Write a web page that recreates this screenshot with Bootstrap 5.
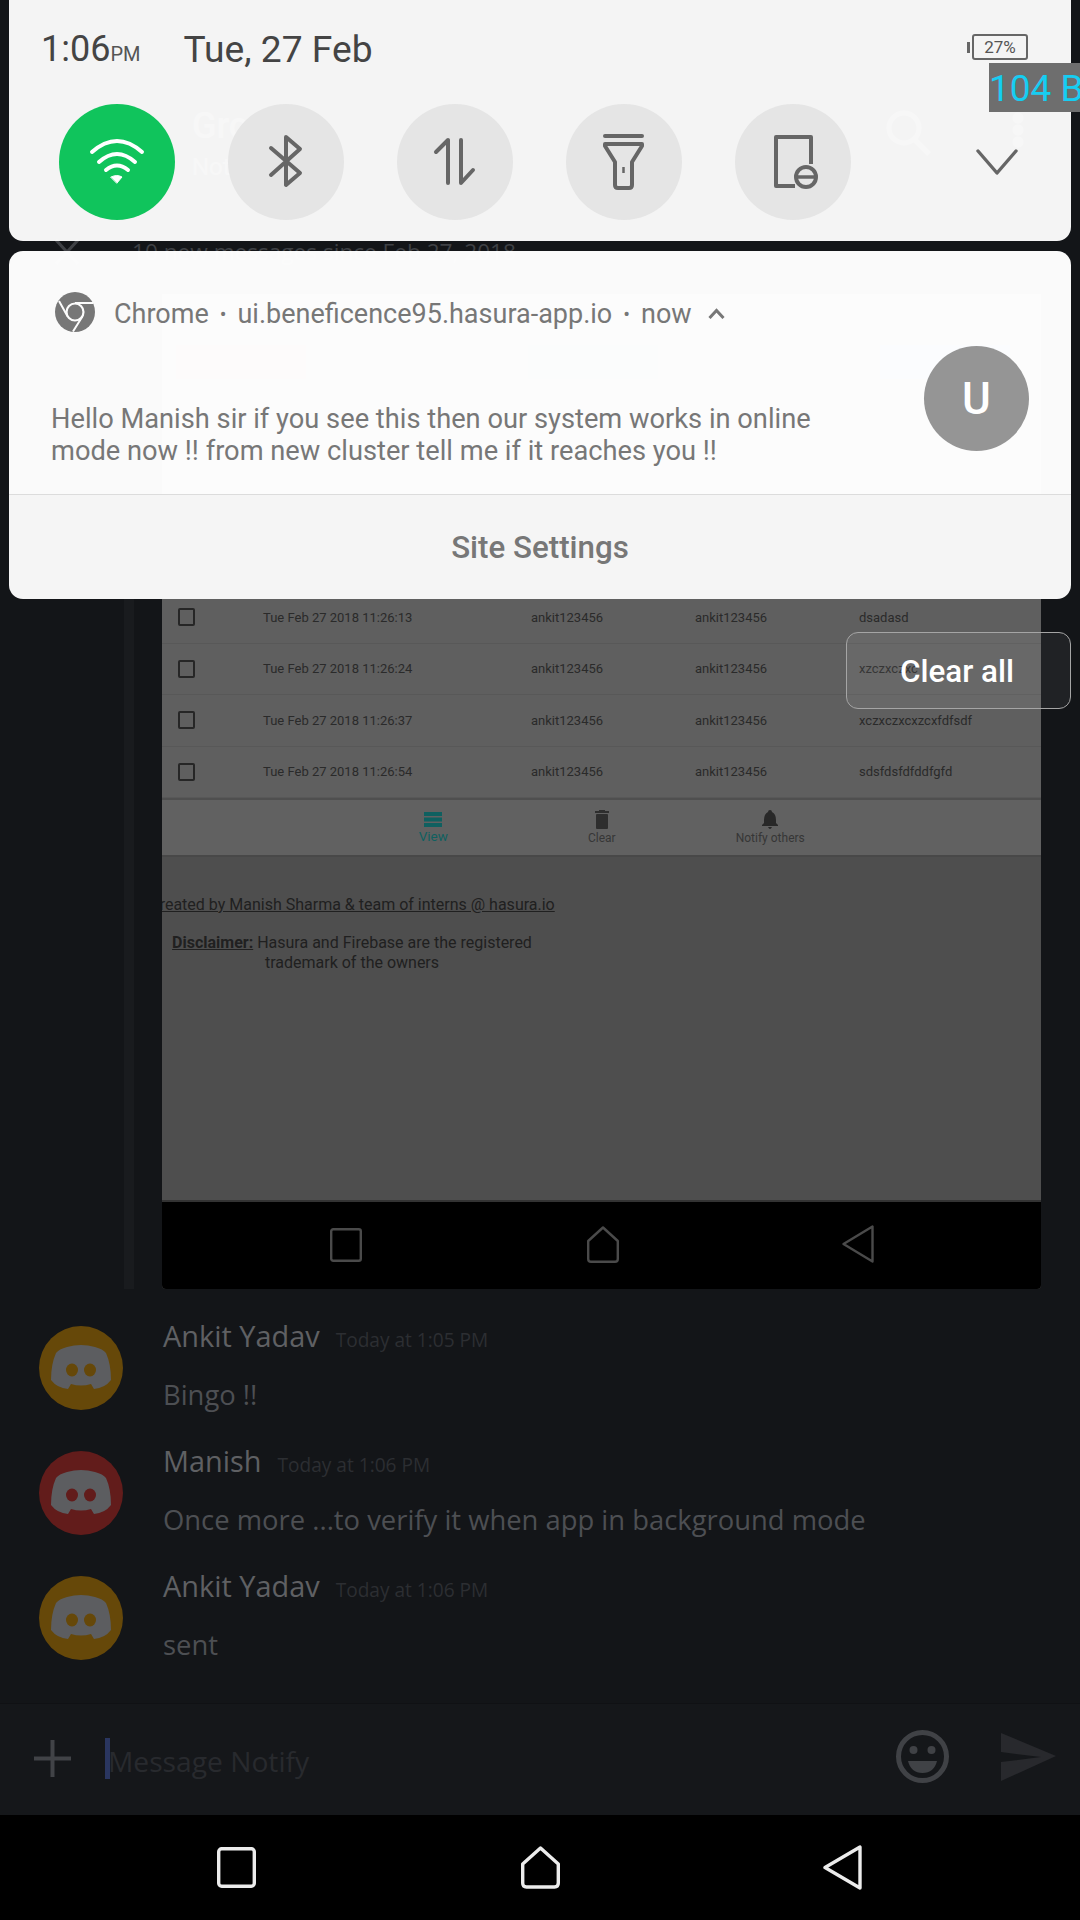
<!DOCTYPE html>
<html lang="en">
<head>
    <meta charset="UTF-8">
    <meta name="viewport" content="width=device-width, initial-scale=1.0">
    <title>Notification shade</title>
    <link href="https://cdn.jsdelivr.net/npm/bootstrap@5.3.0/dist/css/bootstrap.min.css" rel="stylesheet">
    <style>
        body { background: #131518; font-family: Roboto, "Liberation Sans", sans-serif; }
        .screen { width: 1080px; height: 1920px; overflow: hidden; background: #131518; }

        /* chat behind the shade */
        .chat-head { height: 232px; padding: 108px 56px 0 45px; color: #6a6c70; }
        .chat-title { margin-left: 147px; font-size: 36px; line-height: 36px; font-weight: 500; }
        .chat-sub { margin-left: 147px; font-size: 24px; line-height: 30px; margin-top: 8px; }
        .new-bar { height: 40px; padding-left: 55px; color: #3f4145; font-family: "Open Sans", sans-serif; font-size: 22.6px; }
        .new-bar span { margin-left: 53px; }
        .embed-wrap { padding-left: 124px; margin-top: 22px; }
        .embed-rule { width: 10px; background: #191b1e; margin-right: 28px; }
        .embed-shot { width: 879px; background: #5f5f5f; border-radius: 0 0 4px 4px; overflow: hidden; }
        .shot-top { height: 298px; padding: 51px 14px 0; gap: 222px; }
        .ghost-btn { height: 34px; width: 130px; opacity: .6; }
        .shot-row { height: 51.5px; border-bottom: 1px solid #585858; font-size: 13px; color: #2a2a2a; }
        .shot-check { width: 17px; height: 18px; border: 2px solid #262626; border-radius: 2px; margin-left: 16px; margin-right: 68px; }
        .shot-date { width: 268px; }
        .shot-user { width: 164px; }
        .shot-nav { height: 59px; border-top: 2px solid #4f4f4f; border-bottom: 2px solid #484848; background: #616161; font-size: 12px; color: #363636; padding-left: 187px; }
        .shot-tab { width: 168.5px; line-height: 14px; }
        .shot-tab svg { display: block; margin: 0 auto 2px; }
        .tab-on { color: #0f6060; font-size: 13.5px; }
        .shot-foot { height: 343px; background: #4e4e4e; color: #202020; font-size: 16px; line-height: 20px; overflow: hidden; padding-top: 38px; }
        .foot-text { width: 420px; margin-left: -20px; white-space: nowrap; }
        .foot-text p { margin: 0 0 18px; }
        .shot-bar { height: 89px; background: #000; border-top: 2px solid #333; }

        .msg-list { padding-top: 37px; height: 414px; font-family: "Open Sans", sans-serif; }
        .msg-item { height: 125px; padding-left: 39px; }
        .msg-avatar { width: 84px; height: 84px; margin-right: 40px; }
        .msg-text { margin-top: -7px; }
        .msg-name { font-size: 28.9px; line-height: 34px; color: #5f6063; margin-right: 16px; }
        .msg-time { font-size: 19.1px; color: #2c2e32; }
        .msg-body { font-size: 27.4px; line-height: 34px; color: #4d4f53; margin-top: 23px; }

        .input-bar { height: 112px; background: #15171a; border-top: 1px solid #101114; padding: 0 24px 0 34px; font-family: "Open Sans", sans-serif; }
        .input-plus { width: 37px; height: 37px; margin-right: 34px; margin-top: -3px; }
        .input-field { border-left: 5px solid #2a3660; height: 41px; line-height: 46px; font-size: 28.2px; color: #282a2e; margin-top: -3px; text-indent: -2px; }
        .input-emoji { margin-right: 52px; margin-top: -6px; }
        .input-send { margin-top: -6px; }
        .nav-strip { height: 105px; background: #000; }
        .nav-slot { position: absolute; }

        /* shade on top */
        .qs-panel { left: 9px; top: 0; width: 1062px; height: 241px; background: rgba(252, 252, 252, .97); border-radius: 0 0 14px 14px; color: #444; }
        .qs-top { height: 104px; padding: 27px 43px 0 32px; }
        .qs-clock { font-size: 36px; line-height: 44px; color: #444; }
        .qs-clock small { font-size: 20px; color: #555; margin-right: 43px; }
        .qs-date { font-size: 37.2px; line-height: 44px; color: #444; }
        .batt-group { margin-top: 7px; }
        .batt { width: 56px; height: 26px; border: 2px solid #666; border-radius: 3px; font-size: 17px; line-height: 22px; color: #555; margin-left: 2px; }
        .batt-nub { width: 3px; height: 11px; background: #666; }
        .qs-tiles { padding-left: 50px; gap: 53px; }
        .qs-tile { width: 116px; height: 116px; background: #e5e5e5; }
        .tile-on { background: #10c45c; }
        .qs-more { margin-left: 72px; }
        .speed-tag { left: 989px; top: 63px; width: 91px; height: 49px; background: #6e6e6e; color: #16cdf2; font-size: 37px; line-height: 52px; white-space: nowrap; overflow: hidden; }

        .note-panel { left: 9px; top: 251px; width: 1062px; height: 348px; border-radius: 14px; overflow: hidden; color: #777; }
        .note-main { height: 244px; background: rgba(255, 255, 255, .982); border-bottom: 1px solid #dcdcdc; }
        .note-head { height: 122px; padding: 41px 0 0 46px; font-size: 27px; line-height: 44px; }
        .note-head svg.chrome { margin: 0 19px 0 0; }
        .note-dot { margin: 0 11px; font-size: 20px; }
        .note-body { padding-left: 42px; }
        .note-text { width: 780px; font-size: 27.25px; line-height: 32px; padding-top: 30px; }
        .note-avatar { width: 105px; height: 105px; background: #959595; color: #fff; font-size: 44px; font-weight: 500; margin-left: 93px; margin-top: -27px; }
        .note-action { height: 104px; padding-top: 2px; background: #f5f5f5; font-size: 31.3px; font-weight: 500; color: #777; }
        .clear-btn { left: 846px; top: 632px; width: 225px; height: 77px; padding: 3px 3px 0 0 !important; border: 1px solid #a5a5a5; border-radius: 12px; background: rgba(255, 255, 255, .06); color: #fff; font-size: 31.4px; font-weight: 500; }
    </style>
</head>
<body>
<div class="screen position-relative d-flex flex-column">

    <!-- Chat under the shade -->
    <div class="chat-head d-flex justify-content-between">
        <div>
            <div class="chat-title">Group</div>
            <div class="chat-sub">Notify</div>
        </div>
        <svg width="150" height="50" viewBox="0 0 150 50" fill="none" stroke="#6a6c70" stroke-width="5">
            <circle cx="30" cy="20" r="15"/><path d="M40 31 L55 46"/>
            <circle cx="144" cy="10" r="3" fill="#6a6c70"/><circle cx="144" cy="22" r="3" fill="#6a6c70"/><circle cx="144" cy="34" r="3" fill="#6a6c70"/>
        </svg>
    </div>
    <div class="new-bar d-flex align-items-center">
        <svg width="24" height="26" viewBox="0 0 24 26" fill="none" stroke="#3f4145" stroke-width="3"><path d="M1 1 L23 25 M23 1 L1 25"/></svg>
        <span>10 new messages since Feb 27, 2018</span>
    </div>

    <div class="embed-wrap d-flex">
        <div class="embed-rule"></div>
        <div class="embed-shot">
            <div class="shot-top d-flex">
                <div class="ghost-btn bg-danger"></div>
                <div class="ghost-btn bg-success"></div>
                <div class="ghost-btn bg-primary"></div>
            </div>
            <div class="shot-row d-flex align-items-center"><div class="shot-check"></div><div class="shot-date">Tue Feb 27 2018 11:26:13</div><div class="shot-user">ankit123456</div><div class="shot-user">ankit123456</div><div>dsadasd</div></div>
            <div class="shot-row d-flex align-items-center"><div class="shot-check"></div><div class="shot-date">Tue Feb 27 2018 11:26:24</div><div class="shot-user">ankit123456</div><div class="shot-user">ankit123456</div><div>xzczxczxc</div></div>
            <div class="shot-row d-flex align-items-center"><div class="shot-check"></div><div class="shot-date">Tue Feb 27 2018 11:26:37</div><div class="shot-user">ankit123456</div><div class="shot-user">ankit123456</div><div>xczxczxcxzcxfdfsdf</div></div>
            <div class="shot-row d-flex align-items-center"><div class="shot-check"></div><div class="shot-date">Tue Feb 27 2018 11:26:54</div><div class="shot-user">ankit123456</div><div class="shot-user">ankit123456</div><div>sdsfdsfdfddfgfd</div></div>
            <div class="shot-nav d-flex align-items-center">
                <div class="shot-tab text-center tab-on">
                    <svg width="18" height="15" viewBox="0 0 18 15" fill="#0f6060"><rect width="18" height="4"/><rect y="5.5" width="18" height="4"/><rect y="11" width="18" height="4"/></svg>
                    View
                </div>
                <div class="shot-tab text-center">
                    <svg width="14" height="19" viewBox="0 0 14 19" fill="#2e2e2e"><rect y="1" width="14" height="2"/><rect x="4" width="6" height="2"/><rect x="1" y="4" width="12" height="15" rx="1"/></svg>
                    Clear
                </div>
                <div class="shot-tab text-center">
                    <svg width="16" height="19" viewBox="0 0 16 19" fill="#282828"><path d="M8 0 Q10 0 10 2 Q14 4 14 10 V13 L16 15 V16 H0 V15 L2 13 V10 Q2 4 6 2 Q6 0 8 0 Z M6 17 H10 Q9 19 8 19 Q7 19 6 17 Z"/></svg>
                    Notify others
                </div>
            </div>
            <div class="shot-foot">
                <div class="foot-text text-center">
                    <p class="text-decoration-underline">Created by Manish Sharma &amp; team of interns @ hasura.io</p>
                    <p><b class="text-decoration-underline">Disclaimer:</b> Hasura and Firebase are the registered<br>trademark of the owners</p>
                </div>
            </div>
            <div class="shot-bar position-relative">
                <svg class="nav-slot" style="left:168px;top:26px" width="32" height="34" viewBox="0 0 32 34" fill="none" stroke="#4a4a4a" stroke-width="2.4"><rect x="1.2" y="1.2" width="29.6" height="31.6" rx="2"/></svg>
                <svg class="nav-slot" style="left:425px;top:24px" width="32" height="37" viewBox="0 0 32 37" fill="none" stroke="#4a4a4a" stroke-width="2.4"><path d="M16 1.5 L30.8 15 V33 Q30.8 35.8 28 35.8 H4 Q1.2 35.8 1.2 33 V15 Z" stroke-linejoin="round"/></svg>
                <svg class="nav-slot" style="left:680px;top:23px" width="32" height="38" viewBox="0 0 32 38" fill="none" stroke="#4a4a4a" stroke-width="2.4"><path d="M30.5 1.5 V36.5 L1.5 19 Z" stroke-linejoin="round"/></svg>
            </div>
        </div>
    </div>

    <div class="msg-list">
        <div class="msg-item d-flex">
            <svg class="msg-avatar flex-shrink-0" viewBox="0 0 84 84"><circle cx="42" cy="42" r="42" fill="#664809"/><path d="M28 21 Q20 23 17 27 Q12 38 12 54 Q18 62 29 63 L32 58 Q42 61 52 58 L55 63 Q66 62 72 54 Q72 38 67 27 Q64 23 56 21 Q42 17 28 21 Z" fill="#5c5d60"/><ellipse cx="33" cy="44" rx="6" ry="6.5" fill="#664809"/><ellipse cx="51" cy="44" rx="6" ry="6.5" fill="#664809"/></svg>
            <div class="msg-text">
                <div class="d-flex align-items-baseline"><span class="msg-name">Ankit Yadav</span><span class="msg-time">Today at 1:05 PM</span></div>
                <div class="msg-body">Bingo !!</div>
            </div>
        </div>
        <div class="msg-item d-flex">
            <svg class="msg-avatar flex-shrink-0" viewBox="0 0 84 84"><circle cx="42" cy="42" r="42" fill="#621c1b"/><path d="M28 21 Q20 23 17 27 Q12 38 12 54 Q18 62 29 63 L32 58 Q42 61 52 58 L55 63 Q66 62 72 54 Q72 38 67 27 Q64 23 56 21 Q42 17 28 21 Z" fill="#5c5d60"/><ellipse cx="33" cy="44" rx="6" ry="6.5" fill="#621c1b"/><ellipse cx="51" cy="44" rx="6" ry="6.5" fill="#621c1b"/></svg>
            <div class="msg-text">
                <div class="d-flex align-items-baseline"><span class="msg-name">Manish</span><span class="msg-time">Today at 1:06 PM</span></div>
                <div class="msg-body">Once more ...to verify it when app in background mode</div>
            </div>
        </div>
        <div class="msg-item d-flex">
            <svg class="msg-avatar flex-shrink-0" viewBox="0 0 84 84"><circle cx="42" cy="42" r="42" fill="#664809"/><path d="M28 21 Q20 23 17 27 Q12 38 12 54 Q18 62 29 63 L32 58 Q42 61 52 58 L55 63 Q66 62 72 54 Q72 38 67 27 Q64 23 56 21 Q42 17 28 21 Z" fill="#5c5d60"/><ellipse cx="33" cy="44" rx="6" ry="6.5" fill="#664809"/><ellipse cx="51" cy="44" rx="6" ry="6.5" fill="#664809"/></svg>
            <div class="msg-text">
                <div class="d-flex align-items-baseline"><span class="msg-name">Ankit Yadav</span><span class="msg-time">Today at 1:06 PM</span></div>
                <div class="msg-body">sent</div>
            </div>
        </div>
    </div>

    <div class="input-bar d-flex align-items-center">
        <svg class="input-plus" viewBox="0 0 37 37" stroke="#414347" stroke-width="4"><path d="M18.5 0 V37 M0 18.5 H37"/></svg>
        <div class="input-field flex-grow-1">Message Notify</div>
        <svg class="input-emoji" width="53" height="53" viewBox="0 0 53 53" fill="none"><circle cx="26.5" cy="26.5" r="24" stroke="#404246" stroke-width="5"/><circle cx="17.5" cy="20" r="4" fill="#404246"/><circle cx="35.5" cy="20" r="4" fill="#404246"/><path d="M12 31 H41 Q38 43 26.5 43 Q15 43 12 31 Z" fill="#404246"/></svg>
        <svg class="input-send" width="55" height="48" viewBox="0 0 55 48" fill="#28292d"><path d="M0 0 L55 23 L0 48 V29 L40 24 L0 19 Z"/></svg>
    </div>

    <div class="nav-strip position-relative">
        <svg class="nav-slot" style="left:217px;top:32px" width="39" height="41" viewBox="0 0 39 41" fill="none" stroke="#ececec" stroke-width="3.4"><rect x="1.7" y="1.7" width="35.6" height="37.6" rx="3"/></svg>
        <svg class="nav-slot" style="left:521px;top:31px" width="39" height="43" viewBox="0 0 39 43" fill="none" stroke="#ececec" stroke-width="3.4"><path d="M19.5 2 L37.3 18 V37 Q37.3 41 33.5 41 H5.5 Q1.7 41 1.7 37 V18 Z" stroke-linejoin="round"/></svg>
        <svg class="nav-slot" style="left:823px;top:30px" width="39" height="45" viewBox="0 0 39 45" fill="none" stroke="#ececec" stroke-width="3.4"><path d="M37 2 V43 L2 22.5 Z" stroke-linejoin="round"/></svg>
    </div>

    <!-- Quick settings -->
    <div class="qs-panel position-absolute">
        <div class="qs-top d-flex justify-content-between">
            <div class="d-flex">
                <div class="qs-clock">1:06<small>PM</small></div>
                <div class="qs-date">Tue, 27 Feb</div>
            </div>
            <div class="batt-group d-flex align-items-center align-self-start">
                <div class="batt-nub"></div>
                <div class="batt text-center">27%</div>
            </div>
        </div>
        <div class="qs-tiles d-flex align-items-center">
            <div class="qs-tile tile-on rounded-circle flex-shrink-0">
                <svg width="116" height="116" viewBox="0 0 116 116" fill="none" stroke="#fff" stroke-width="4" stroke-linecap="round"><path d="M33 48 Q58 26 83 48"/><path d="M40 58 Q58 42 76 58"/><path d="M47 66 Q58 57 69 66"/><path d="M52 73 Q58 70 63 73 L58 79 Z" fill="#fff" stroke-width="1"/></svg>
            </div>
            <div class="qs-tile rounded-circle flex-shrink-0">
                <svg width="116" height="116" viewBox="0 0 116 116" fill="none" stroke="#666" stroke-width="4" stroke-linecap="round" stroke-linejoin="round"><path d="M43 44 L72 69 L58 81 V33 L72 45 L43 71"/></svg>
            </div>
            <div class="qs-tile rounded-circle flex-shrink-0">
                <svg width="116" height="116" viewBox="0 0 116 116" fill="none" stroke="#666" stroke-width="4" stroke-linecap="round" stroke-linejoin="round"><path d="M39 48 L51 36 V79"/><path d="M64 36 V79 L76 66"/></svg>
            </div>
            <div class="qs-tile rounded-circle flex-shrink-0">
                <svg width="116" height="116" viewBox="0 0 116 116" fill="none" stroke="#666" stroke-width="4" stroke-linejoin="round"><path d="M39 32 H76" stroke-linecap="round"/><path d="M39 40 H76 V42 L66 58 V81 Q66 84 63 84 H52 Q49 84 49 81 V58 L39 42 Z"/><path d="M57.5 63 V69" stroke-width="2.5"/></svg>
            </div>
            <div class="qs-tile rounded-circle flex-shrink-0">
                <svg width="116" height="116" viewBox="0 0 116 116" fill="none" stroke="#666" stroke-width="4" stroke-linejoin="round"><path d="M76 60 V33 H41 V82 H60"/><circle cx="71" cy="73" r="10"/><path d="M61 73 H81" stroke-width="3.5"/></svg>
            </div>
            <svg class="qs-more" width="42" height="26" viewBox="0 0 42 26" fill="none" stroke="#666" stroke-width="3.4" stroke-linecap="round" stroke-linejoin="round"><path d="M2 2 L21 24 L40 2"/></svg>
        </div>
    </div>
    <div class="speed-tag position-absolute">104 B</div>

    <!-- Chrome notification -->
    <div class="note-panel position-absolute">
        <div class="note-main">
            <div class="note-head d-flex align-items-start">
                <svg class="chrome" width="40" height="40" viewBox="0 0 40 40" fill="none"><circle cx="20" cy="20" r="20" fill="#777"/><path d="M20 11 H38 M12.4 24 L4 9 M27.4 24.5 L18 39.5" stroke="#fcfcfc" stroke-width="2"/><circle cx="20" cy="20" r="8.5" fill="#777" stroke="#fcfcfc" stroke-width="2.2"/></svg>
                <span>Chrome</span><span class="note-dot">•</span><span>ui.beneficence95.hasura-app.io</span><span class="note-dot">•</span><span>now</span>
                <svg class="ms-3 mt-3" width="17" height="11" viewBox="0 0 17 11" fill="none" stroke="#777" stroke-width="3"><path d="M1.5 10 L8.5 2.5 L15.5 10"/></svg>
            </div>
            <div class="note-body d-flex align-items-start">
                <div class="note-text">Hello Manish sir if you see this then our system works in online mode now !! from new cluster tell me if it reaches you !!</div>
                <div class="note-avatar rounded-circle d-flex align-items-center justify-content-center flex-shrink-0">U</div>
            </div>
        </div>
        <div class="note-action d-flex align-items-center justify-content-center">Site Settings</div>
    </div>

    <button type="button" class="clear-btn btn position-absolute">Clear all</button>
</div>

<script src="https://cdn.jsdelivr.net/npm/bootstrap@5.3.0/dist/js/bootstrap.bundle.min.js"></script>
</body>
</html>
